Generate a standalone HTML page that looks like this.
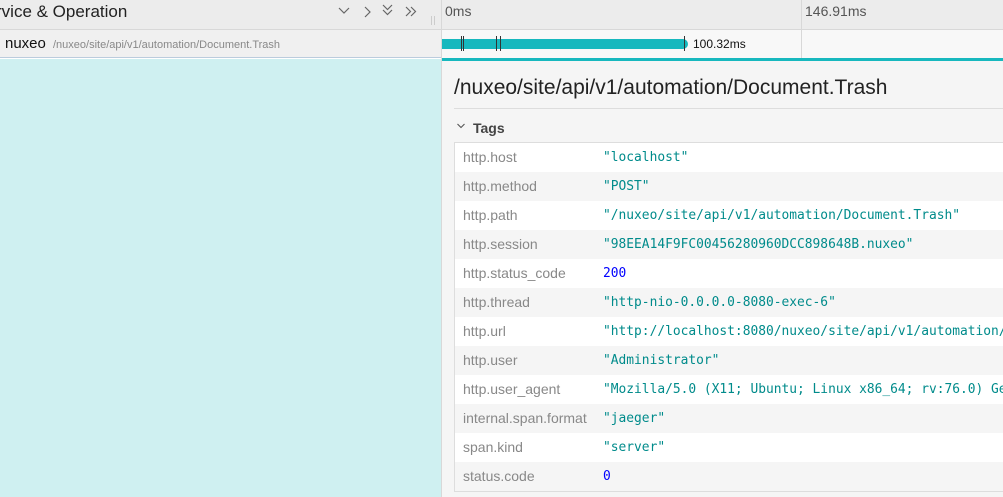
<!DOCTYPE html>
<html><head><style>
*{margin:0;padding:0;box-sizing:border-box}
body{width:1003px;height:497px;overflow:hidden;background:#fff;font-family:"Liberation Sans",sans-serif;position:relative}
.a{position:absolute}
.mono{font-family:"DejaVu Sans Mono","Liberation Mono",monospace;font-size:12.9px}
.row{position:absolute;left:455px;width:548px;height:29px;font-size:14px;color:#888}
.row .k{position:absolute;left:8px;top:6px}
.row .v{position:absolute;left:148px;top:7px;color:#008b8b}
</style></head><body>
<div class="a" style="left:0;top:0;width:1003px;height:30px;background:#ececec;border-bottom:1px solid #d8d8d8"></div>
<div class="a" style="left:-4px;top:2px;font-size:17px;color:#222">rvice &amp; Operation</div>
<svg class="a" style="left:330px;top:0" width="95" height="25" fill="none" stroke="#666" stroke-width="1.2">
<path d="M9 8 L14 13 L19 8"/>
<path d="M35 7 L40 12 L35 17"/>
<path d="M53 5 L57.5 9.5 L62 5 M53 10 L57.5 14.5 L62 10"/>
<path d="M76 7 L80.5 11.5 L76 16 M81 7 L85.5 11.5 L81 16"/>
</svg>
<div class="a" style="left:431px;top:16px;width:4px;height:9px;border-left:1px solid #ccc;border-right:1px solid #ccc"></div>
<div class="a" style="left:441px;top:0;width:1px;height:497px;background:#d8d8d8"></div>
<div class="a" style="left:801px;top:0;width:1px;height:58px;background:#d8d8d8"></div>
<div class="a" style="left:445px;top:3px;font-size:14px;color:#555">0ms</div>
<div class="a" style="left:805px;top:3px;font-size:14px;color:#555">146.91ms</div>
<div class="a" style="left:0;top:30px;width:441px;height:28px;background:#f0f0f0;border-bottom:1px solid #bcd"></div>
<div class="a" style="left:5px;top:35px;font-size:15px;color:#111">nuxeo</div>
<div class="a" style="left:53px;top:39px;font-size:11px;color:#888">/nuxeo/site/api/v1/automation/Document.Trash</div>
<div class="a" style="left:0;top:59px;width:441px;height:438px;background:#cff0f1"></div>
<div class="a" style="left:442px;top:30px;width:561px;height:28px;background:#f8f8f8"></div>
<div class="a" style="left:801px;top:30px;width:1px;height:28px;background:#d8d8d8"></div>
<div class="a" style="left:442px;top:39px;width:246px;height:10px;background:#17b8be;border-radius:0 5px 5px 0"></div>
<div class="a" style="left:461px;top:36px;width:3px;height:15px;border-left:1px solid #333;border-right:1px solid #333"></div>
<div class="a" style="left:496px;top:36px;width:5px;height:15px;border-left:1px solid #333;border-right:1px solid #333"></div>
<div class="a" style="left:684px;top:36px;width:1px;height:15px;background:#333"></div>
<div class="a" style="left:693px;top:37px;font-size:12px;color:#111">100.32ms</div>
<div class="a" style="left:442px;top:58px;width:561px;height:3px;background:#17b8be"></div>
<div class="a" style="left:442px;top:61px;width:561px;height:436px;background:#f5f5f5"></div>
<div class="a" style="left:454px;top:76px;font-size:21px;color:#222">/nuxeo/site/api/v1/automation/Document.Trash</div>
<div class="a" style="left:454px;top:108px;width:549px;height:1px;background:#ddd"></div>
<svg class="a" style="left:456px;top:122px" width="10" height="8" fill="none" stroke="#555" stroke-width="1.1"><path d="M1.5 2 L5 5.5 L8.5 2"/></svg>
<div class="a" style="left:473px;top:120px;font-size:14px;font-weight:bold;color:#444">Tags</div>
<div class="a" style="left:454px;top:142px;width:549px;height:350px;border:1px solid #ddd;border-right:none;background:#fff"></div>
<div class="row" style="top:143px;background:#fff"><span class="k">http.host</span><span class="v mono">"localhost"</span></div>
<div class="row" style="top:172px;background:#f5f5f5"><span class="k">http.method</span><span class="v mono">"POST"</span></div>
<div class="row" style="top:201px;background:#fff"><span class="k">http.path</span><span class="v mono">"/nuxeo/site/api/v1/automation/Document.Trash"</span></div>
<div class="row" style="top:230px;background:#f5f5f5"><span class="k">http.session</span><span class="v mono">"98EEA14F9FC00456280960DCC898648B.nuxeo"</span></div>
<div class="row" style="top:259px;background:#fff"><span class="k">http.status_code</span><span class="v mono" style="color:#00f">200</span></div>
<div class="row" style="top:288px;background:#f5f5f5"><span class="k">http.thread</span><span class="v mono">"http-nio-0.0.0.0-8080-exec-6"</span></div>
<div class="row" style="top:317px;background:#fff;overflow:hidden"><span class="k">http.url</span><span class="v mono" style="white-space:nowrap">"http://localhost:8080/nuxeo/site/api/v1/automation/Document.Trash"</span></div>
<div class="row" style="top:346px;background:#f5f5f5"><span class="k">http.user</span><span class="v mono">"Administrator"</span></div>
<div class="row" style="top:375px;background:#fff;overflow:hidden"><span class="k">http.user_agent</span><span class="v mono" style="white-space:nowrap">"Mozilla/5.0 (X11; Ubuntu; Linux x86_64; rv:76.0) Gecko"</span></div>
<div class="row" style="top:404px;background:#f5f5f5"><span class="k">internal.span.format</span><span class="v mono">"jaeger"</span></div>
<div class="row" style="top:433px;background:#fff"><span class="k">span.kind</span><span class="v mono">"server"</span></div>
<div class="row" style="top:462px;background:#f5f5f5"><span class="k">status.code</span><span class="v mono" style="color:#00f">0</span></div>
</body></html>
